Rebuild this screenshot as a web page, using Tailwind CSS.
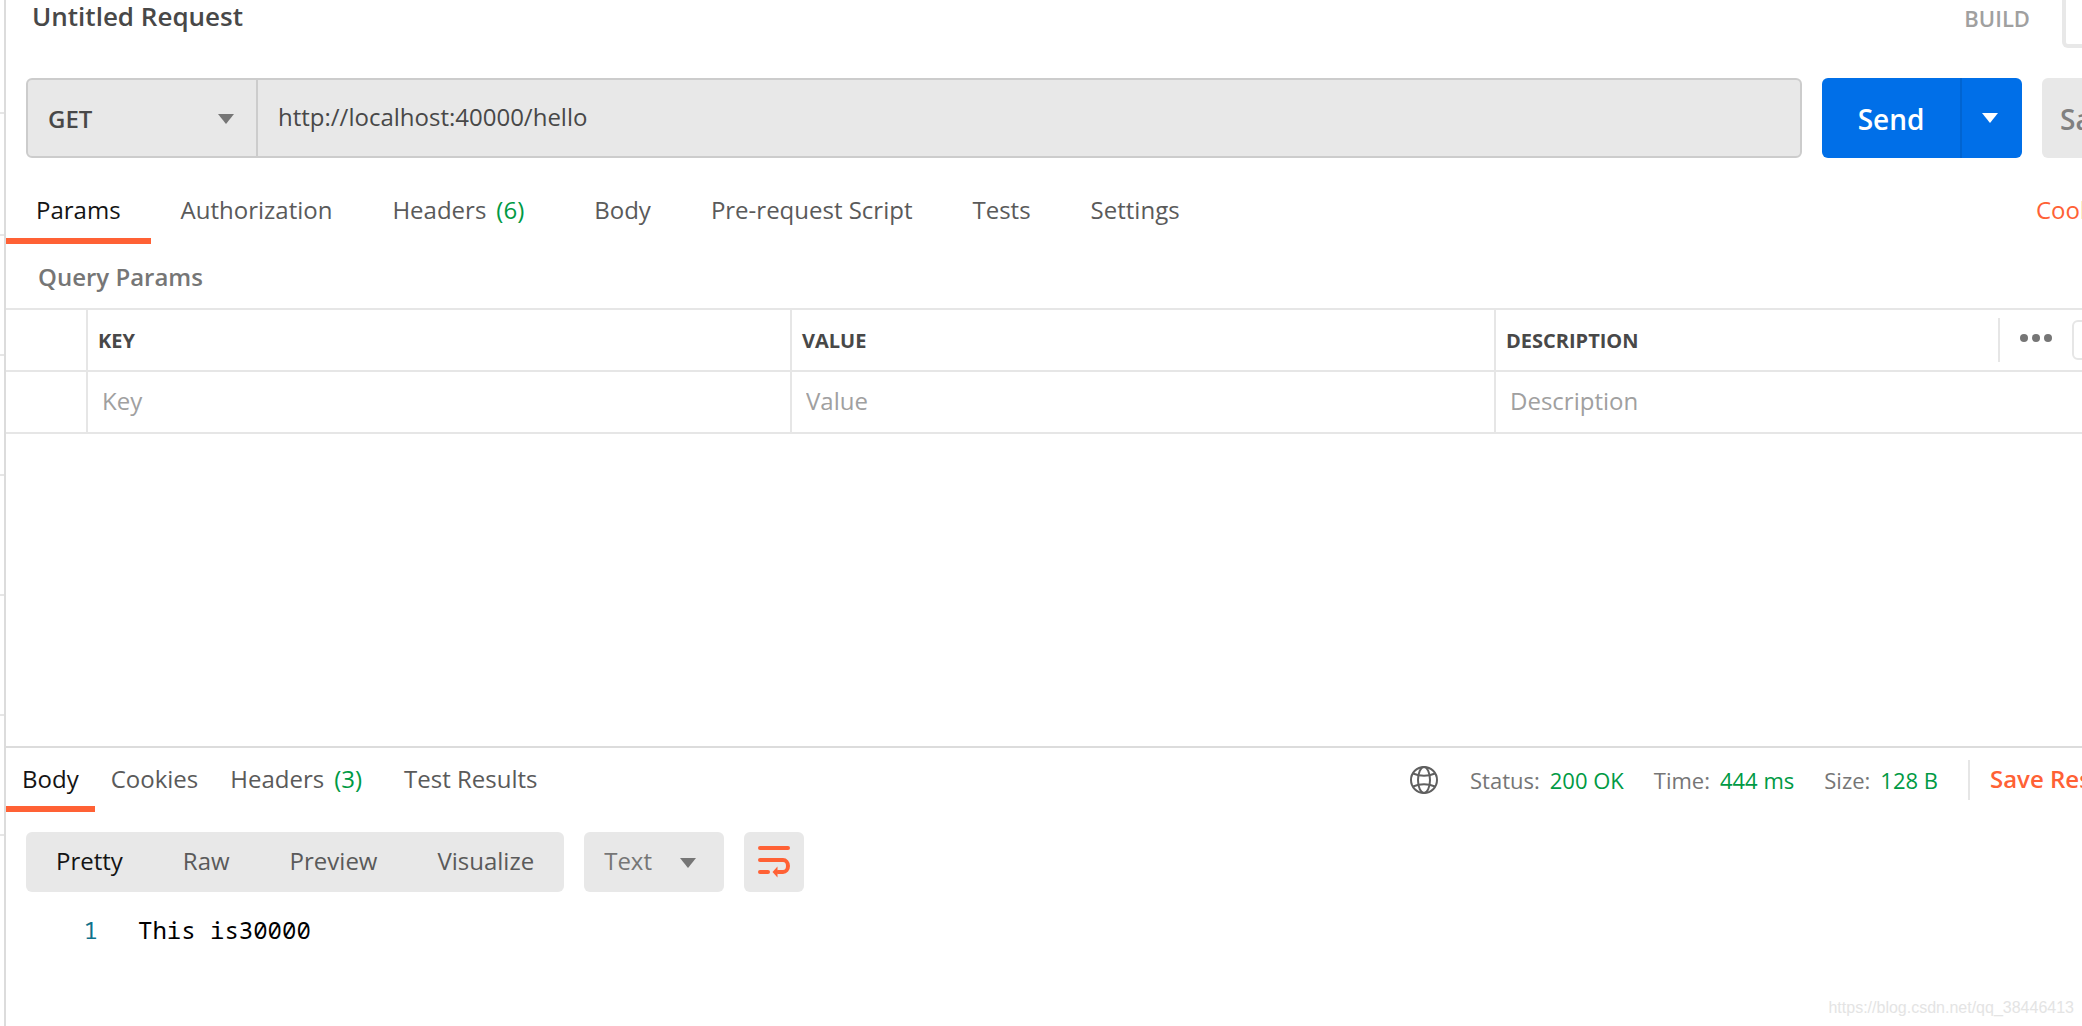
<!DOCTYPE html>
<html lang="en">
<head>
<meta charset="utf-8">
<title>Untitled Request</title>
<script src="https://cdn.jsdelivr.net/npm/@tailwindcss/browser@4"></script>
</head>
<body class="bg-white">
<div class="relative flex h-screen overflow-hidden font-['Open_Sans',sans-serif] text-2xl leading-8 text-[#5a5a5a]">

  <!-- Edge of the history sidebar -->
  <aside class="flex w-1.5 shrink-0 flex-col border-r-2 border-[#dcdcdc]">
    <div class="h-[114px] shrink-0 border-b-2 border-[#e6e6e6]"></div>
    <div class="h-[122px] shrink-0 border-b-2 border-[#e6e6e6]"></div>
    <div class="h-[120px] shrink-0 border-b-2 border-[#e6e6e6]"></div>
    <div class="h-[120px] shrink-0 border-b-2 border-[#e6e6e6]"></div>
    <div class="h-[120px] shrink-0 border-b-2 border-[#e6e6e6]"></div>
    <div class="h-[120px] shrink-0 border-b-2 border-[#e6e6e6]"></div>
    <div class="h-[120px] shrink-0 border-b-2 border-[#e6e6e6]"></div>
  </aside>

  <!-- Workspace, wider than the window and clipped at its right edge -->
  <main class="-mr-[120px] flex min-w-0 flex-1 flex-col">
    <section class="flex min-h-0 flex-1 flex-col">
      <header class="flex h-[78px] shrink-0 items-start pl-[26px]">
        <h1 class="text-[26px] leading-8 font-semibold text-[#484848]">Untitled Request</h1>
        <button type="button" class="ml-auto text-[22px] leading-9 font-semibold text-[#a0a0a0]">BUILD</button>
        <div class="ml-8 h-12 w-[140px] rounded-b-md border-4 border-t-0 border-[#e8e8e8]"></div>
      </header>

      <form class="flex h-20 shrink-0 gap-5 pl-5">
        <div class="flex min-w-0 flex-1 overflow-hidden rounded-md border-2 border-[#cccccc] bg-[#e8e8e8]">
          <div class="relative w-[230px] shrink-0 border-r-2 border-[#cccccc]">
            <select aria-label="Method" class="h-full w-full appearance-none bg-transparent pt-0.5 pl-5 font-semibold text-[#484848]"><option>GET</option></select>
            <svg class="pointer-events-none absolute top-[34px] right-[22px] h-2.5 w-4" viewBox="0 0 16 10"><path d="M0 0h16L8 10z" fill="#767676"/></svg>
          </div>
          <input aria-label="Request URL" type="text" value="http://localhost:40000/hello" class="min-w-0 flex-1 bg-transparent px-5 pb-0.5 text-[#484848]">
        </div>
        <div class="flex w-[200px] shrink-0 overflow-hidden rounded-md bg-[#006fe8] text-[28px] font-semibold text-white">
          <button type="button" class="w-[138px] pt-0.5">Send</button>
          <button type="button" aria-label="Send options" class="flex flex-1 items-center justify-center border-l-2 border-[#0064d1] pr-1">
            <svg class="h-2.5 w-4" viewBox="0 0 16 10"><path d="M0 0h16L8 10z" fill="#fff"/></svg>
          </button>
        </div>
        <button type="button" class="w-40 shrink-0 rounded-md bg-[#e8e8e8] pt-0.5 pl-[18px] text-left text-[28px] font-semibold text-[#808080]">Save</button>
      </form>

      <nav class="flex h-[86px] shrink-0 items-stretch">
        <button type="button" class="border-b-6 border-[#ff6135] px-[30px] pt-6 text-[#141414]">Params</button>
        <button type="button" class="px-[30px] pt-[18px]">Authorization</button>
        <button type="button" class="flex items-center gap-2.5 px-[30px] pt-[18px]">Headers <span class="text-[#009a44]">(6)</span></button>
        <button type="button" class="ml-2.5 px-[30px] pt-[18px]">Body</button>
        <button type="button" class="px-[30px] pt-[18px]">Pre-request Script</button>
        <button type="button" class="px-[30px] pt-[18px]">Tests</button>
        <button type="button" class="px-[30px] pt-[18px]">Settings</button>
        <a href="#" class="ml-auto w-[166px] pt-9 text-[#ff6135]">Cookies</a>
      </nav>

      <h2 class="h-16 shrink-0 pt-[17px] pl-8 font-semibold text-[#767676]">Query Params</h2>

      <table class="w-full shrink-0 table-fixed border-collapse border-y-2 border-[#e6e6e6] text-left">
        <colgroup><col class="w-[81px]"><col><col><col class="w-[707px]"></colgroup>
        <thead class="text-xl font-bold text-[#484848]">
          <tr class="h-[62px] border-b-2 border-[#e6e6e6]">
            <th class="border-r-2 border-[#e6e6e6]"></th>
            <th class="border-r-2 border-[#e6e6e6] pt-0.5 pl-2.5">KEY</th>
            <th class="border-r-2 border-[#e6e6e6] pt-0.5 pl-2.5">VALUE</th>
            <th class="p-0 pl-2.5">
              <div class="flex items-center"><span class="pt-0.5">DESCRIPTION</span>
                <div class="ml-auto flex h-11 w-[204px] items-center border-l-2 border-[#e6e6e6]">
                  <button type="button" aria-label="More options" class="px-5 pb-1"><svg class="h-2 w-8" viewBox="0 0 32 8" fill="#767676"><circle cx="4" cy="4" r="4"/><circle cx="16" cy="4" r="4"/><circle cx="28" cy="4" r="4"/></svg></button>
                  <div class="h-10 w-40 rounded-md border-2 border-[#e6e6e6]"></div>
                </div>
              </div>
            </th>
          </tr>
        </thead>
        <tbody>
          <tr class="h-[62px]">
            <td class="border-r-2 border-[#e6e6e6]"></td>
            <td class="border-r-2 border-[#e6e6e6] p-0"><input aria-label="Key" placeholder="Key" class="w-full px-3.5 pb-0.5 placeholder:text-[#a0a0a0]"></td>
            <td class="border-r-2 border-[#e6e6e6] p-0"><input aria-label="Value" placeholder="Value" class="w-full px-3.5 pb-0.5 placeholder:text-[#a0a0a0]"></td>
            <td class="p-0"><input aria-label="Description" placeholder="Description" class="w-full px-3.5 pb-0.5 placeholder:text-[#a0a0a0]"></td>
          </tr>
        </tbody>
      </table>
    </section>

    <section class="h-[280px] shrink-0 border-t-2 border-[#dcdcdc]">
      <div class="flex h-16 items-stretch">
        <button type="button" class="border-b-6 border-[#ff6135] px-4 pt-1 text-[#141414]">Body</button>
        <button type="button" class="px-4 pb-0.5">Cookies</button>
        <button type="button" class="flex items-center gap-2.5 px-4 pb-0.5">Headers <span class="text-[#009a44]">(3)</span></button>
        <button type="button" class="ml-2.5 px-4 pb-0.5">Test Results</button>
        <div class="ml-auto flex w-[792px] items-center text-[22px] text-[#767676]">
          <svg class="mr-8 h-7 w-7" viewBox="0 0 28 28" fill="none" stroke="#5f5f5f" stroke-width="2"><circle cx="14" cy="14" r="13"/><ellipse cx="14" cy="14" rx="6" ry="13"/><path d="M3 7.500Q14 12 25 7.500M3 20.500Q14 16 25 20.500"/></svg>
          <span class="mr-2.5">Status:</span><span class="mr-[30px] text-[#009a44]">200 OK</span>
          <span class="mr-2.5">Time:</span><span class="mr-[30px] text-[#009a44]">444 ms</span>
          <span class="mr-2.5">Size:</span><span class="mr-[30px] text-[#009a44]">128 B</span>
          <button type="button" class="h-10 border-l-2 border-[#e6e6e6] pb-0.5 pl-5 text-2xl font-semibold whitespace-nowrap text-[#ff6135]">Save Response</button>
        </div>
      </div>

      <div class="mt-5 flex h-[60px] gap-5 pl-5">
        <div class="flex rounded-md bg-[#e8e8e8]">
          <button type="button" class="px-[30px] pb-0.5 text-[#141414]">Pretty</button>
          <button type="button" class="px-[30px] pb-0.5">Raw</button>
          <button type="button" class="px-[30px] pb-0.5">Preview</button>
          <button type="button" class="px-[30px] pb-0.5">Visualize</button>
        </div>
        <div class="relative w-[140px] rounded-md bg-[#e8e8e8]">
          <select aria-label="Format" class="h-full w-full appearance-none bg-transparent pb-0.5 pl-5 text-[#767676]"><option>Text</option></select>
          <svg class="pointer-events-none absolute top-[26px] right-7 h-2.5 w-4" viewBox="0 0 16 10"><path d="M0 0h16L8 10z" fill="#767676"/></svg>
        </div>
        <button type="button" aria-label="Wrap lines" class="flex w-[60px] items-center justify-center rounded-md bg-[#e8e8e8]">
          <svg class="h-8 w-8" viewBox="0 0 32 32" fill="none" stroke="#ff6135" stroke-width="4" stroke-linecap="round"><path d="M2 2h28M2 14h23a5 6 0 0 1 0 12h-5M2 26h8"/><path d="M14.500 26l5-5.500v11z" fill="#ff6135" stroke="none"/></svg>
        </button>
      </div>

      <div class="mt-5 flex font-['Noto_Sans_Mono','DejaVu_Sans_Mono',monospace] leading-9 text-black">
        <span class="w-[92px] text-right text-[#0f718c]">1</span>
        <code class="pl-10 font-[inherit]">This is30000</code>
      </div>
    </section>
  </main>

  <div class="absolute right-2 bottom-1.5 font-['Liberation_Sans',sans-serif] text-base leading-6 text-[#e4e4e4]">https://blog.csdn.net/qq_38446413</div>
</div>
</body>
</html>
